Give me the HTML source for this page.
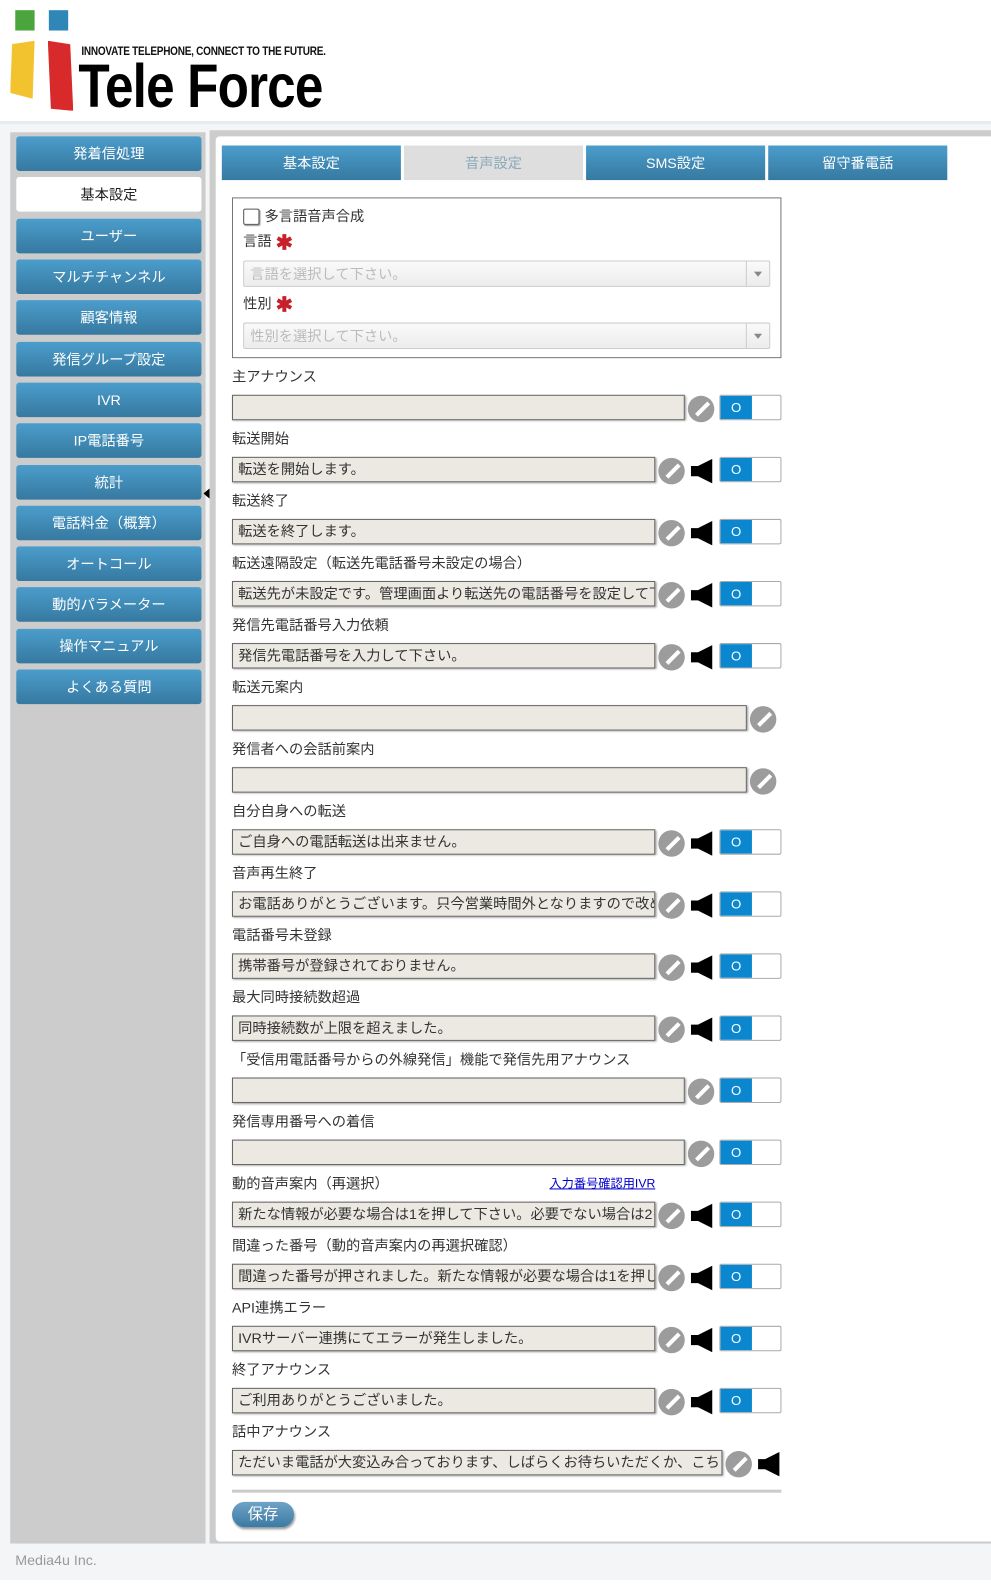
<!DOCTYPE html>
<html><head><meta charset="utf-8"><style>
html,body{margin:0;padding:0;width:991px;height:1595px;overflow:hidden;background:#fff}
#w{position:absolute;left:0;top:0;width:974px;height:1568px;transform:scale(1.0175);transform-origin:0 0;background:#f4f5f7;font-family:"Liberation Sans","Noto Sans CJK JP",sans-serif;font-size:14px;color:#333}
.a{position:absolute}
#hd{left:0;top:0;width:974px;height:119px;background:#fff}
#side{left:10px;top:130px;width:192px;height:1387px;background:#ccc}
.sb{position:absolute;left:6px;width:182px;height:34px;border-radius:3px;background:linear-gradient(#4b9dcc,#3679a0);color:#fff;text-align:center;line-height:34px;font-size:14px}
.sb.on{background:#fff;color:#222}
#main{left:206px;top:128px;width:768px;height:1389px;background:#ccc}
#inner{left:212px;top:134px;width:762px;height:1381px;background:#fff;border-radius:4px 0 0 4px}
.tab{position:absolute;top:143px;width:176px;height:34px;background:linear-gradient(#4b9dcc,#3679a0);color:#fff;text-align:center;line-height:34px}
.tab.g{background:#dedede;color:#8ab}
#box{left:228px;top:194px;width:538px;height:156px;border:1px solid #777}
.sel{position:absolute;left:10px;width:516px;height:24px;border:1px solid #ccc;border-radius:2px;background:linear-gradient(#fafafa,#ececec);color:#bbb;line-height:24px;text-indent:6px}
.sel:after{content:"";position:absolute;right:0;top:0;width:22px;height:24px;border-left:1px solid #ccc}
.sel i{position:absolute;right:7px;top:10px;border:4px solid transparent;border-top:5px solid #888;z-index:2}
.star{color:#c8202a;font-weight:bold;font-size:20px;vertical-align:-3px;margin-left:4px}
.r{position:absolute;left:228px;width:560px;height:52px}
.lab{position:absolute;left:0;top:0;height:16px;line-height:16px;white-space:nowrap}
.inp{position:absolute;left:0;top:26px;height:23px;border:1px solid #666;background:#ebe9e2;box-shadow:1px 1px 2px #999;line-height:23px;padding-left:5px;overflow:hidden;white-space:nowrap;box-sizing:content-box}
.pen{position:absolute;top:27px;width:26px;height:26px;border-radius:50%;background:#9c9c9c;overflow:hidden}
.pen:before{content:"";position:absolute;left:6px;top:11px;width:17px;height:4px;background:#fff;transform:rotate(-45deg)}
.spk{position:absolute;top:28px;width:22px;height:24px}
.tg{position:absolute;left:479px;top:26px;width:59px;height:23px;border:1px solid #aaa;border-radius:2px;background:#fff;overflow:hidden}
.tg b{position:absolute;left:0;top:0;width:31px;height:23px;background:#0a87cf;color:#fff;font-weight:normal;text-align:center;line-height:23px;font-size:13px}
</style></head><body><div id="w">
<div id="hd" class="a">
<div class="a" style="left:15px;top:10px;width:19px;height:20px;background:#4aa53c"></div>
<div class="a" style="left:48px;top:10px;width:19px;height:20px;background:#2f87b7"></div>
<div class="a" style="left:10px;top:40px;width:24px;height:57px;background:#f3c32f;clip-path:polygon(8% 6%,100% 0,92% 100%,0 90%)"></div>
<div class="a" style="left:47px;top:40px;width:25px;height:69px;background:#d82a2b;clip-path:polygon(0 0,88% 5%,100% 100%,12% 97%)"></div>
<div class="a" style="left:80px;top:43px;font-size:12px;font-weight:bold;color:#111;letter-spacing:-0.3px;transform:scaleX(0.82);transform-origin:0 0;white-space:nowrap">INNOVATE TELEPHONE, CONNECT TO THE FUTURE.</div>
<div class="a" style="left:77px;top:54px;font-family:'Liberation Sans',sans-serif;font-size:60px;font-weight:bold;color:#000;line-height:62px;letter-spacing:-1px;transform:scaleX(0.84);transform-origin:0 0;white-space:nowrap">Tele Force</div>
</div>
<div class="a" style="left:0;top:119px;width:974px;height:3px;background:#e9eaec"></div>
<div id="side" class="a">
<div class="sb" style="top:4px">発着信処理</div>
<div class="sb on" style="top:44px">基本設定</div>
<div class="sb" style="top:85px">ユーザー</div>
<div class="sb" style="top:125px">マルチチャンネル</div>
<div class="sb" style="top:165px">顧客情報</div>
<div class="sb" style="top:206px">発信グループ設定</div>
<div class="sb" style="top:246px">IVR</div>
<div class="sb" style="top:286px">IP電話番号</div>
<div class="sb" style="top:327px">統計</div>
<div class="sb" style="top:367px">電話料金（概算）</div>
<div class="sb" style="top:407px">オートコール</div>
<div class="sb" style="top:447px">動的パラメーター</div>
<div class="sb" style="top:488px">操作マニュアル</div>
<div class="sb" style="top:528px">よくある質問</div>
</div>
<div class="a" style="left:200px;top:480px;border:5px solid transparent;border-right:6px solid #000;border-left:0"></div>
<div id="main" class="a"></div>
<div id="inner" class="a"></div>
<div class="tab" style="left:218px">基本設定</div>
<div class="tab g" style="left:397px">音声設定</div>
<div class="tab" style="left:576px">SMS設定</div>
<div class="tab" style="left:755px">留守番電話</div>
<div id="box" class="a">
<div class="a" style="left:10px;top:10px;width:14px;height:14px;border:1px solid #555;border-radius:2px;box-shadow:1px 1px 1px #999"></div>
<div class="a" style="left:31px;top:9px;line-height:16px">多言語音声合成</div>
<div class="a" style="left:10px;top:34px;line-height:16px">言語<span class="star">✱</span></div>
<div class="sel" style="top:61px">言語を選択して下さい。<i></i></div>
<div class="a" style="left:10px;top:95px;line-height:16px">性別<span class="star">✱</span></div>
<div class="sel" style="top:122px">性別を選択して下さい。<i></i></div>
</div>

<svg width="0" height="0" style="position:absolute"><defs><symbol id="sp" viewBox="0 0 22 24"><path d="M0 7h7l14-7v24l-14-7H0z" fill="#000"/></symbol></defs></svg>

<div class="r" style="top:362px"><div class="lab">主アナウンス</div><div class="inp" style="width:438px"></div><div class="pen" style="left:448px"></div><div class="tg"><b>O</b></div></div>
<div class="r" style="top:423px"><div class="lab">転送開始</div><div class="inp" style="width:409px">転送を開始します。</div><div class="pen" style="left:419px"></div><svg class="spk" style="left:451px"><use href="#sp"/></svg><div class="tg"><b>O</b></div></div>
<div class="r" style="top:484px"><div class="lab">転送終了</div><div class="inp" style="width:409px">転送を終了します。</div><div class="pen" style="left:419px"></div><svg class="spk" style="left:451px"><use href="#sp"/></svg><div class="tg"><b>O</b></div></div>
<div class="r" style="top:545px"><div class="lab">転送遠隔設定（転送先電話番号未設定の場合）</div><div class="inp" style="width:409px">転送先が未設定です。管理画面より転送先の電話番号を設定して下さい。</div><div class="pen" style="left:419px"></div><svg class="spk" style="left:451px"><use href="#sp"/></svg><div class="tg"><b>O</b></div></div>
<div class="r" style="top:606px"><div class="lab">発信先電話番号入力依頼</div><div class="inp" style="width:409px">発信先電話番号を入力して下さい。</div><div class="pen" style="left:419px"></div><svg class="spk" style="left:451px"><use href="#sp"/></svg><div class="tg"><b>O</b></div></div>
<div class="r" style="top:667px"><div class="lab">転送元案内</div><div class="inp" style="width:499px"></div><div class="pen" style="left:509px"></div></div>
<div class="r" style="top:728px"><div class="lab">発信者への会話前案内</div><div class="inp" style="width:499px"></div><div class="pen" style="left:509px"></div></div>
<div class="r" style="top:789px"><div class="lab">自分自身への転送</div><div class="inp" style="width:409px">ご自身への電話転送は出来ません。</div><div class="pen" style="left:419px"></div><svg class="spk" style="left:451px"><use href="#sp"/></svg><div class="tg"><b>O</b></div></div>
<div class="r" style="top:850px"><div class="lab">音声再生終了</div><div class="inp" style="width:409px">お電話ありがとうございます。只今営業時間外となりますので改めて</div><div class="pen" style="left:419px"></div><svg class="spk" style="left:451px"><use href="#sp"/></svg><div class="tg"><b>O</b></div></div>
<div class="r" style="top:911px"><div class="lab">電話番号未登録</div><div class="inp" style="width:409px">携帯番号が登録されておりません。</div><div class="pen" style="left:419px"></div><svg class="spk" style="left:451px"><use href="#sp"/></svg><div class="tg"><b>O</b></div></div>
<div class="r" style="top:972px"><div class="lab">最大同時接続数超過</div><div class="inp" style="width:409px">同時接続数が上限を超えました。</div><div class="pen" style="left:419px"></div><svg class="spk" style="left:451px"><use href="#sp"/></svg><div class="tg"><b>O</b></div></div>
<div class="r" style="top:1033px"><div class="lab">「受信用電話番号からの外線発信」機能で発信先用アナウンス</div><div class="inp" style="width:438px"></div><div class="pen" style="left:448px"></div><div class="tg"><b>O</b></div></div>
<div class="r" style="top:1094px"><div class="lab">発信専用番号への着信</div><div class="inp" style="width:438px"></div><div class="pen" style="left:448px"></div><div class="tg"><b>O</b></div></div>
<div class="r" style="top:1155px"><div class="lab">動的音声案内（再選択）</div><div class="lab" style="left:312px;color:#00c;text-decoration:underline;font-size:12px">入力番号確認用IVR</div><div class="inp" style="width:409px">新たな情報が必要な場合は1を押して下さい。必要でない場合は2を</div><div class="pen" style="left:419px"></div><svg class="spk" style="left:451px"><use href="#sp"/></svg><div class="tg"><b>O</b></div></div>
<div class="r" style="top:1216px"><div class="lab">間違った番号（動的音声案内の再選択確認）</div><div class="inp" style="width:409px">間違った番号が押されました。新たな情報が必要な場合は1を押して</div><div class="pen" style="left:419px"></div><svg class="spk" style="left:451px"><use href="#sp"/></svg><div class="tg"><b>O</b></div></div>
<div class="r" style="top:1277px"><div class="lab">API連携エラー</div><div class="inp" style="width:409px">IVRサーバー連携にてエラーが発生しました。</div><div class="pen" style="left:419px"></div><svg class="spk" style="left:451px"><use href="#sp"/></svg><div class="tg"><b>O</b></div></div>
<div class="r" style="top:1338px"><div class="lab">終了アナウンス</div><div class="inp" style="width:409px">ご利用ありがとうございました。</div><div class="pen" style="left:419px"></div><svg class="spk" style="left:451px"><use href="#sp"/></svg><div class="tg"><b>O</b></div></div>
<div class="r" style="top:1399px"><div class="lab">話中アナウンス</div><div class="inp" style="width:475px">ただいま電話が大変込み合っております、しばらくお待ちいただくか、こちら</div><div class="pen" style="left:485px"></div><svg class="spk" style="left:517px"><use href="#sp"/></svg></div>

<div class="a" style="left:228px;top:1464px;width:540px;height:3px;background:#ccc"></div>
<div class="a" style="left:228px;top:1476px;width:61px;height:25px;border-radius:13px;background:linear-gradient(#6fa3c6,#3b7aa3);color:#fff;text-align:center;line-height:25px;font-size:15px;box-shadow:1px 2px 2px #999">保存</div>
<div class="a" style="left:15px;top:1525px;color:#999;font-size:14px">Media4u Inc.</div>
<div class="a" style="left:0;top:1553px;width:974px;height:15px;background:#fff"></div>
</div></body></html>
